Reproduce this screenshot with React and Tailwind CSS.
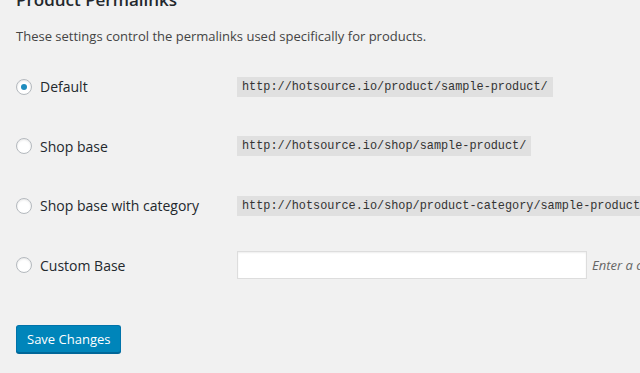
import React from 'react';

const rows = [
  { label: 'Default', code: 'http://hotsource.io/product/sample-product/', checked: true },
  { label: 'Shop base', code: 'http://hotsource.io/shop/sample-product/' },
  { label: 'Shop base with category', code: 'http://hotsource.io/shop/product-category/sample-product/' },
  { label: 'Custom Base', input: true },
];

const Radio = ({ checked }) => (
  <span className="w-4 h-4 rounded-full bg-white border border-[#b4b9be] shadow-[inset_0_1px_2px_rgba(0,0,0,0.1)] flex items-center justify-center shrink-0">
    {checked && <span className="w-[6px] h-[6px] rounded-full bg-[#1e8cbe]"></span>}
  </span>
);

export default function App() {
  return (
    <div className="bg-[#f1f1f1] h-[373px] w-[640px] overflow-hidden pl-4 font-['Open_Sans',sans-serif] text-[#444]">
      <h2 className="mt-[-12px] text-[17px] leading-[24px] font-semibold text-[#23282d]">Product Permalinks</h2>
      <p className="mt-[14px] text-[13px] leading-[20px]">These settings control the permalinks used specifically for products.</p>

      <div className="mt-[11px]">
        {rows.map((row) => (
          <div key={row.label} className="flex items-center h-[59.5px]">
            <label className="w-[221px] flex items-center gap-2 text-[14px] text-[#23282d] shrink-0">
              <Radio checked={row.checked} />
              <span>{row.label}</span>
            </label>
            {row.input ? (
              <div className="flex items-center gap-[5px] shrink-0">
                <input type="text" className="w-[350px] h-[28px] bg-white border border-[#ddd] shadow-[inset_0_1px_2px_rgba(0,0,0,0.07)] outline-none" />
                <span className="text-[13px] italic text-[#666] whitespace-nowrap">Enter a custom base to use. A base must be set or WordPress will use default instead.</span>
              </div>
            ) : (
              <code className="bg-[rgba(0,0,0,0.07)] pt-[3px] pb-[2px] px-[5px] font-['Liberation_Mono',monospace] text-[11.85px] leading-[15px] text-[#333] whitespace-nowrap">{row.code}</code>
            )}
          </div>
        ))}
      </div>

      <button className="mt-[30px] h-[28px] px-[10px] bg-[#0085ba] border border-[#0073aa] border-b-[#006799] shadow-[0_1px_0_#006799] rounded-[3px] text-white text-[13px] leading-[26px]">
        Save Changes
      </button>
    </div>
  );
}
